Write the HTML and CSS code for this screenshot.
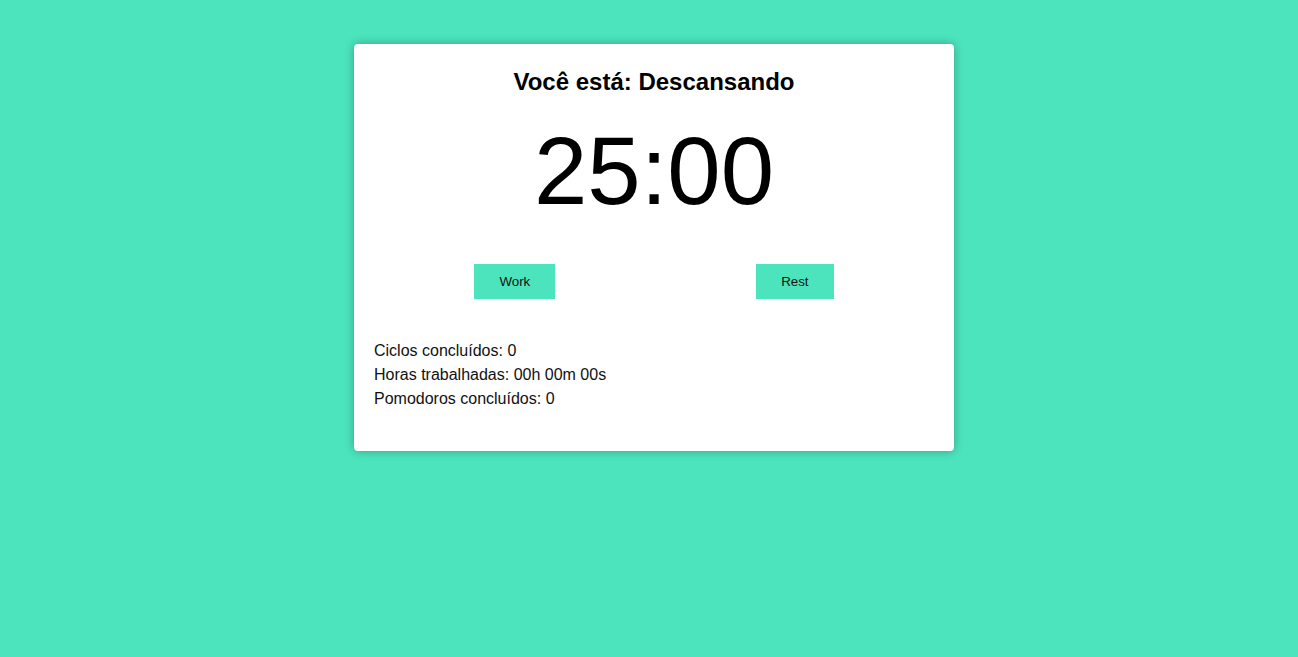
FILE: index.html
```html
<!DOCTYPE html>
<html lang="pt">
<head>
<meta charset="utf-8">
<title>Pomodoro</title>
<link rel="stylesheet" href="styles.css">
</head>
<body>
<main class="card">
  <h1 class="status">Você está: Descansando</h1>
  <div class="timer">25:00</div>
  <div class="controls">
    <button class="btn">Work</button>
    <button class="btn">Rest</button>
  </div>
  <div class="stats">
    <p>Ciclos concluídos: 0</p>
    <p>Horas trabalhadas: 00h 00m 00s</p>
    <p>Pomodoros concluídos: 0</p>
  </div>
</main>
</body>
</html>
```

FILE: styles.css
```css
html, body {
  margin: 0;
  padding: 0;
}
body {
  background: #4ce4bd;
  font-family: "Liberation Sans", Arial, sans-serif;
  min-height: 657px;
  padding: 44px 0 0 10px;
  box-sizing: border-box;
}
.card {
  width: 600px;
  box-sizing: border-box;
  margin: 0 auto;
  background: #fff;
  border-radius: 4px;
  box-shadow: 0 0 10px rgba(0, 0, 0, 0.3);
  padding: 24px 20px 40px;
}
.status {
  margin: 0;
  font-size: 24px;
  font-weight: bold;
  text-align: center;
  color: #000;
}
.timer {
  margin-top: 20px;
  font-size: 96px;
  text-align: center;
  color: #000;
}
.controls {
  margin-top: 38px;
  display: flex;
  justify-content: space-around;
}
.btn {
  background: #4ce4bd;
  border: none;
  padding: 10px 25px;
  font-family: "Liberation Sans", Arial, sans-serif;
  font-size: 13.333px;
  color: #111;
  height: 35px;
}
.stats {
  margin-top: 40px;
}
.stats p {
  margin: 0;
  font-size: 16px;
  line-height: 24px;
  color: #111;
}
```
